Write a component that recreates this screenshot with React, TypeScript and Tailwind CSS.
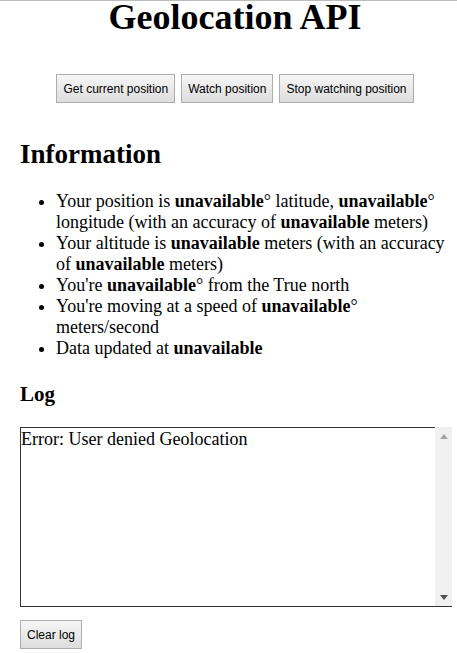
import React from 'react';

const serif = "font-['Liberation_Serif','Times_New_Roman',serif]";
const btn =
  "h-[29px] px-[6px] border border-[#adadad] bg-gradient-to-b from-[#f6f6f6] to-[#dddddd] text-[12px] text-black font-['Liberation_Sans',Arial,sans-serif] leading-none whitespace-nowrap";

const Unavailable: React.FC = () => <b className="font-bold">unavailable</b>;

const App: React.FC = () => {
  return (
    <div className={`min-h-[653px] w-[457px] bg-white border-t border-[#bbbbbb] text-black ${serif}`}>
      <div className="pl-[20px] pr-[7px]">
        <h1 className="text-[36px] leading-[32px] font-bold text-center">Geolocation API</h1>

        <div className="mt-[41px] flex justify-center gap-[6px]">
          <button type="button" className={btn}>Get current position</button>
          <button type="button" className={btn}>Watch position</button>
          <button type="button" className={btn}>Stop watching position</button>
        </div>

        <h2 className="mt-[38px] text-[27px] leading-[27px] font-bold">Information</h2>

        <ul className="mt-[23px] list-disc pl-[36px] text-[18px] leading-[21px]">
          <li>
            Your position is <Unavailable />° latitude, <Unavailable />° longitude (with an accuracy of{' '}
            <Unavailable /> meters)
          </li>
          <li>
            Your altitude is <Unavailable /> meters (with an accuracy of <Unavailable /> meters)
          </li>
          <li>
            You're <Unavailable />° from the True north
          </li>
          <li>
            You're moving at a speed of <Unavailable />° meters/second
          </li>
          <li>
            Data updated at <Unavailable />
          </li>
        </ul>

        <h3 className="mt-[25px] text-[21px] leading-[21px] font-bold">Log</h3>

        {/* Log box with a drawn scrollbar */}
        <div className="mt-[22px] w-[432px] h-[180px] flex border-b border-[#333333]">
          <div className="flex-1 border-l border-t border-[#333333] pt-[1px] text-[18px] leading-[20.75px]">
            Error: User denied Geolocation
          </div>
          <div className="w-[17px] bg-[#f0f0f0] flex flex-col items-center justify-between pt-[7px] pb-[6px]">
            <svg width="8" height="5" viewBox="0 0 8 5">
              <path d="M0 5 L4 0 L8 5 Z" fill="#a3a3a3" />
            </svg>
            <svg width="8" height="5" viewBox="0 0 8 5">
              <path d="M0 0 L8 0 L4 5 Z" fill="#505050" />
            </svg>
          </div>
        </div>

        <div className="mt-[13px]">
          <button type="button" className={btn}>Clear log</button>
        </div>
      </div>
    </div>
  );
};

export default App;
